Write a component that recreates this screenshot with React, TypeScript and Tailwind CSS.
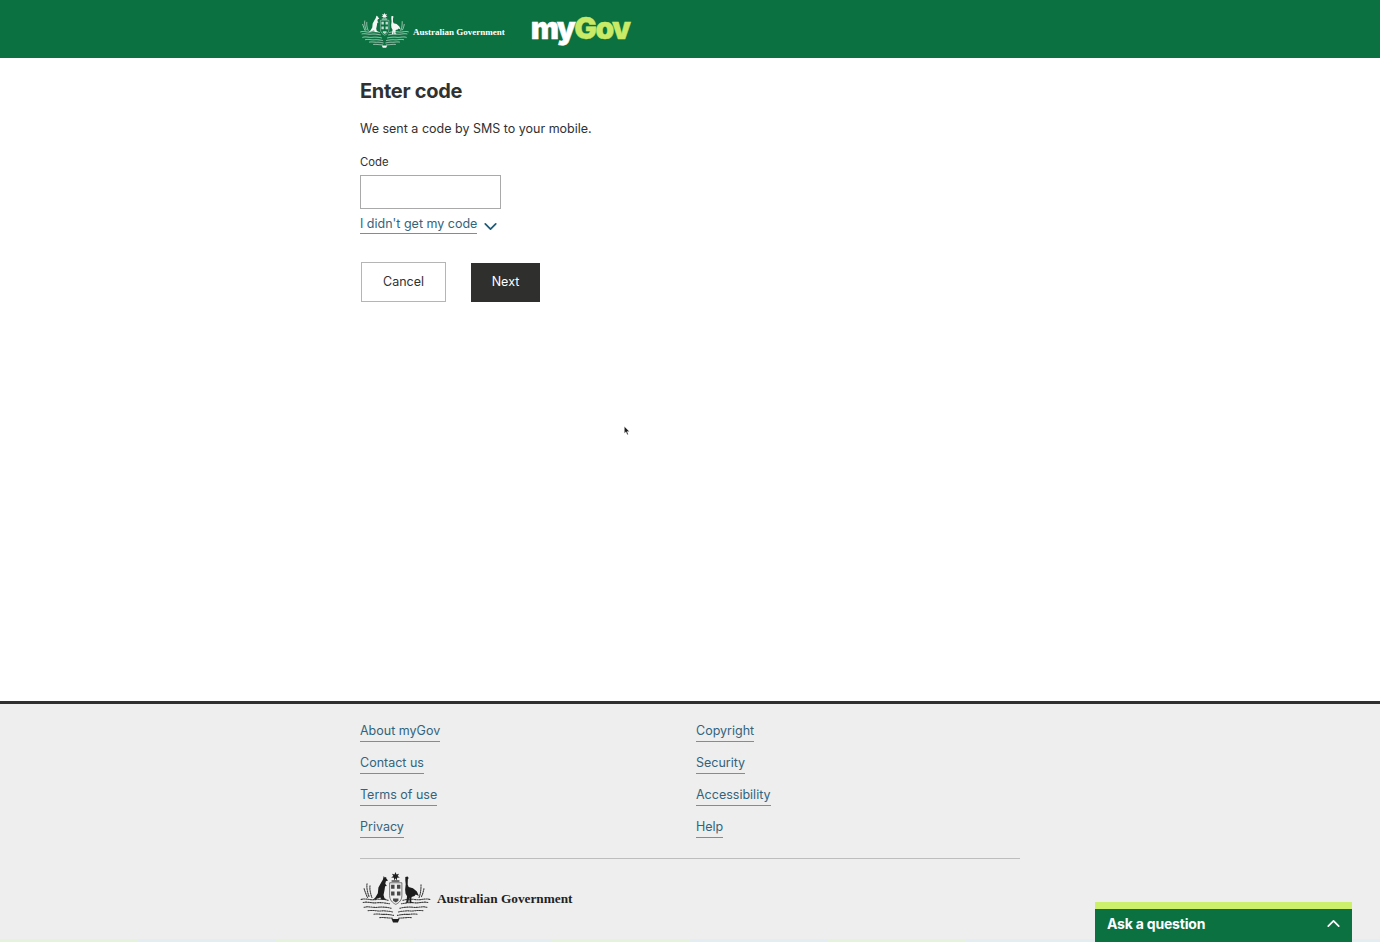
import { ChevronDown, ChevronUp } from 'lucide-react';

const footerLeft = ['About myGov', 'Contact us', 'Terms of use', 'Privacy'];
const footerRight = ['Copyright', 'Security', 'Accessibility', 'Help'];

const strip = [
  'bg-[#e6f3dc]', 'bg-[#e3edf2]', 'bg-[#e6f3dc]', 'bg-[#e3edf2]', 'bg-[#e6f3dc]', 'bg-[#e3edf2]',
  'bg-[#e6f3dc]', 'bg-[#e3edf2]', 'bg-[#e6f3dc]', 'bg-[#e3edf2]',
];

function Crest({ className, fill, detail }: { className: string; fill: string; detail: string }) {
  return (
    <svg viewBox="0 0 72 54" className={className} aria-hidden="true">
      {/* wattle sprays */}
      <g fill="none" stroke={fill} strokeLinecap="round" strokeWidth="1.1" strokeDasharray="1.3 1.1" opacity="0.85">
        <path d="M1 29c5-1.6 9 1 14 .2s9-.6 14 .8" />
        <path d="M71 29c-5-1.6-9 1-14 .2s-9-.6-14 .8" />
        <path d="M3 32c5-1 9 1 14 .4s9 .4 13 1" />
        <path d="M69 32c-5-1-9 1-14 .4s-9 .4-13 1" />
        <path d="M4 37c5-1.4 9 .6 14 0s10 0 14 1" />
        <path d="M68 37c-5-1.4-9 .6-14 0s-10 0-14 1" />
        <path d="M8 40.500c5-1 9 .6 13 .2s8 .2 12 1" />
        <path d="M64 40.500c-5-1-9 .6-13 .2s-8 .2-12 1" />
        <path d="M14 44c4-.6 8 .4 11 .2s6 .4 9 1" />
        <path d="M58 44c-4-.6-8 .4-11 .2s-6 .4-9 1" />
        <path d="M20 47.500c4-.4 8 .4 13 .6" />
        <path d="M52 47.500c-4-.4-8 .4-13 .6" />
        <path d="M7 13c-.6 4 .4 9 2.400 14" />
        <path d="M10 15c-.4 4 .4 8 2 12" />
        <path d="M4 18c1 3 2 6 3.500 9" />
        <path d="M62 14c0 5-.4 9-2 13" />
        <path d="M65 18c-.6 3-1.400 6-3 9" />
      </g>
      {/* star */}
      <path d="M36 1l1 2.600 2.600-.8-1.400 2.400 2.200 1.500-2.800.3-.2 2.800-1.400-2.300-1.400 2.300-.2-2.800-2.800-.3 2.200-1.500-1.400-2.400 2.600.8z" fill={fill} />
      <rect x="32" y="9.600" width="8" height="1.200" fill={fill} />
      {/* shield */}
      <path d="M30 12h12.500v13c0 4.500-2.700 7.400-6.200 9-3.500-1.600-6.300-4.500-6.300-9z" fill={detail} stroke={fill} strokeWidth="0.6" />
      <path d="M31.500 14h3.500v4h-3.500zM37.500 14h3.500v4h-3.500zM31.500 21h3.500v4h-3.500zM37.500 21h3.500v4h-3.500z" fill={fill} opacity="0.8" />
      <path d="M33.500 28h5.500v2.400l-2.700 1.600-2.800-1.600z" fill={fill} opacity="0.8" />
      {/* kangaroo */}
      <g transform="translate(-2 0)">
        <path d="M26 5l1 1.600 1.400-.6.4 2 1.600 1.600-2.200.8-.6 2.600 1.600 2.200-1.800.3-.6 4-1 5 1 3.200 2.400 1.400-5.400.2-1.200-2.400-3 1-5 2 3-3.200 2.400-4 .6-6 2.800-5 1.800-3z" fill={fill} />
      </g>
      {/* emu */}
      <g transform="translate(2 0)">
        <path d="M44 6l2.400-.4 1 1.600-.8 1.200-.2 5.400 1 2.600 4.400 1.200 4 3.400 2 4.400-3.200-1.400-1.200 1.400-3 1-.4 4.600 2 1.400-3.600.2-.4-5.600-1 5.400-2.200.2 1-6.800-1.600-2.800-.4-4.200.6-5.200-.4-4z" fill={fill} />
      </g>
      <path d="M32 49h8l-1.500 3.500h-5z" fill={fill} />
    </svg>
  );
}

function FooterLink({ label }: { label: string }) {
  return (
    <a href="#" className="block w-fit h-[23px] border-b border-[#6d93a6] text-[12.5px] leading-[21px] pt-[1px] text-[#33647c]">
      {label}
    </a>
  );
}

export default function App() {
  return (
    <div className="relative h-[942px] overflow-hidden flex flex-col bg-white text-[#313131] font-['Inter','Liberation_Sans',sans-serif]">
      {/* Header */}
      <header className="h-[58px] shrink-0 bg-[#0b7140]">
        <div className="w-[660px] ml-[360px] h-full flex items-center">
          <Crest className="w-[49px] h-[37px] mt-[2px]" fill="#f3f8f4" detail="#0b7140" />
          <span className="ml-[4px] mt-[7px] font-['Liberation_Serif',serif] font-bold text-[9px] text-white whitespace-nowrap">
            Australian Government
          </span>
          <span className="ml-[26px] mt-[-3px] font-black text-[30px] leading-none tracking-[-1.6px] [-webkit-text-stroke:0.4px_currentColor] whitespace-nowrap">
            <span className="text-white">my</span>
            <span className="text-[#c9ea67]">Gov</span>
          </span>
        </div>
      </header>

      {/* Main */}
      <main className="flex-1 w-[660px] ml-[360px]">
        <h1 className="mt-[19px] text-[20px] leading-[28px] font-bold tracking-[-0.3px]">Enter code</h1>
        <p className="mt-[14px] text-[12.5px] leading-[20px]">We sent a code by SMS to your mobile.</p>
        <label className="block mt-[14px] text-[11.3px] leading-[18px]">Code</label>
        <input className="block mt-[4px] w-[141px] h-[34px] border border-[#a9a9a9] bg-white" />
        <div className="mt-[4px] flex items-start">
          <a href="#" className="h-[21px] pt-[1px] border-b border-[#6d93a6] text-[12.5px] leading-[20px] text-[#33647c]">
            I didn't get my code
          </a>
          <ChevronDown className="ml-[3px] mt-[3px] text-[#1f5a78]" size={21} strokeWidth={2} />
        </div>
        <div className="mt-[25px] ml-[1px] flex items-start">
          <button className="w-[85px] h-[40px] border border-[#b5b5b5] bg-white text-[12.5px]">Cancel</button>
          <button className="ml-[25px] mt-[1px] w-[69px] h-[39px] bg-[#2f2f2d] text-white text-[12.5px]">Next</button>
        </div>
      </main>

      {/* Footer */}
      <footer className="h-[241px] shrink-0 border-t-[3px] border-[#2f2f2f] bg-[#eeeeee] flex flex-col">
        <div className="flex-1 w-[660px] ml-[360px]">
          <div className="pt-[15px] grid grid-cols-[336px_1fr]">
            <div className="flex flex-col gap-[9px]">
              {footerLeft.map((l) => (
                <FooterLink key={l} label={l} />
              ))}
            </div>
            <div className="flex flex-col gap-[9px]">
              {footerRight.map((l) => (
                <FooterLink key={l} label={l} />
              ))}
            </div>
          </div>
          <div className="mt-[20px] border-t border-[#bdbdbd] flex items-center pt-[12px]">
            <Crest className="w-[71px] h-[53px]" fill="#1d1d1d" detail="#eeeeee" />
            <span className="ml-[6px] mt-[2px] font-['Liberation_Serif',serif] font-bold text-[13.3px] text-[#1f1f1f] whitespace-nowrap">
              Australian Government
            </span>
          </div>
        </div>
        <div className="h-[3px] flex">
          {strip.map((c, i) => (
            <div key={i} className={`flex-1 ${c}`} />
          ))}
        </div>
      </footer>

      {/* Ask a question widget */}
      <div className="absolute right-[28px] bottom-0 w-[257px] h-[40px] border-t-[7px] border-[#cdf06c] bg-[#0b7140] flex items-center justify-between pl-[12px] pr-[8px] pb-[5px] text-white">
        <span className="text-[14px] font-bold tracking-[-0.2px]">Ask a question</span>
        <ChevronUp size={21} strokeWidth={2} />
      </div>

      {/* Mouse pointer */}
      <svg viewBox="0 0 8 13" className="absolute left-[624px] top-[425px] w-[6px] h-[12px]" aria-hidden="true">
        <path d="M0.5 0.5v9l2.2-2 1.6 4 1.4-.6-1.6-3.8h3z" fill="#1a1a1a" stroke="#fff" strokeWidth="0.4" />
      </svg>
    </div>
  );
}
